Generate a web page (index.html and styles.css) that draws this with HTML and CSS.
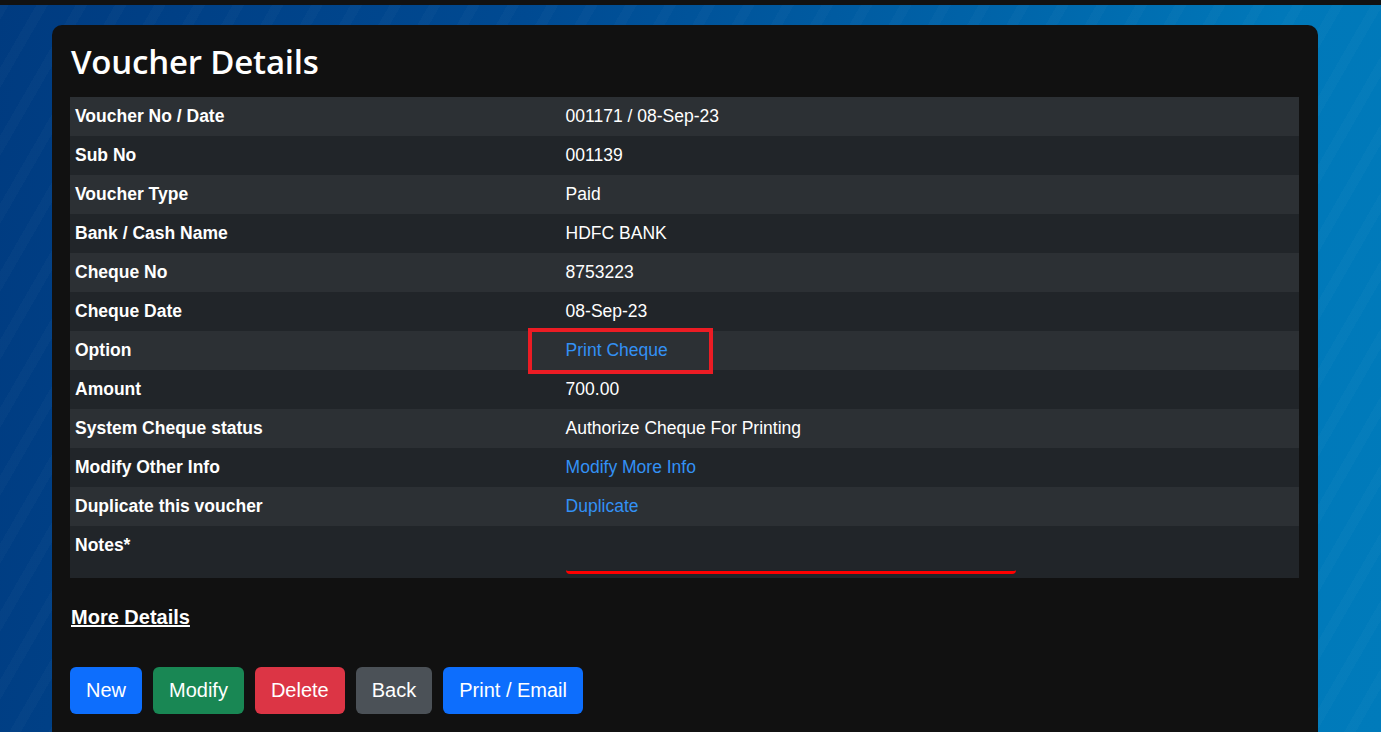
FILE: index.html
```html
<!DOCTYPE html>
<html lang="en">
<head>
<meta charset="utf-8">
<title>Voucher Details</title>
<link rel="stylesheet" href="styles.css">
</head>
<body>
<div class="topbar"></div>
<main class="page">
  <section class="card">
    <h1 class="title">Voucher Details</h1>
    <table class="details">
      <colgroup><col class="col-label"><col class="col-value"></colgroup>
      <tbody>
        <tr><th>Voucher No / Date</th><td>001171 / 08-Sep-23</td></tr>
        <tr><th>Sub No</th><td>001139</td></tr>
        <tr><th>Voucher Type</th><td>Paid</td></tr>
        <tr><th>Bank / Cash Name</th><td>HDFC BANK</td></tr>
        <tr><th>Cheque No</th><td>8753223</td></tr>
        <tr><th>Cheque Date</th><td>08-Sep-23</td></tr>
        <tr><th>Option</th><td><span class="highlight"><a href="#" class="link">Print Cheque</a></span></td></tr>
        <tr><th>Amount</th><td>700.00</td></tr>
        <tr><th>System Cheque status</th><td>Authorize Cheque For Printing</td></tr>
        <tr><th>Modify Other Info</th><td><a href="#" class="link">Modify More Info</a></td></tr>
        <tr><th>Duplicate this voucher</th><td><a href="#" class="link">Duplicate</a></td></tr>
        <tr class="notes-row"><th>Notes*</th><td><input class="notes-input" type="text" aria-label="Notes"></td></tr>
      </tbody>
    </table>
    <a href="#" class="more">More Details</a>
    <div class="actions">
      <button class="btn btn-primary">New</button>
      <button class="btn btn-success">Modify</button>
      <button class="btn btn-danger">Delete</button>
      <button class="btn btn-secondary">Back</button>
      <button class="btn btn-primary">Print / Email</button>
    </div>
  </section>
</main>
</body>
</html>
```
FILE: styles.css
```css
html, body {
  margin: 0;
  padding: 0;
}
body {
  height: 732px;
  overflow: hidden;
  font-family: "Liberation Sans", Arial, sans-serif;
  font-size: 16px;
  color: #fff;
  background:
    repeating-linear-gradient(120deg, rgba(255,255,255,0.018) 0 10px, rgba(255,255,255,0) 10px 34px),
    linear-gradient(100deg, #003b80 0%, #004a92 35%, #0063a8 65%, #0078b9 85%, #007bbb 100%);
}
.topbar {
  height: 5px;
  background: #121212;
}
.page {
  padding: 20px 63px 0 52px;
}
.card {
  background: #111111;
  border-radius: 10px;
  padding: 16px 19px 60px 18px;
}
.title {
  margin: 0 0 14px 1px;
  font-family: "Open Sans", "Noto Sans", sans-serif;
  font-weight: 600;
  font-size: 33px;
  line-height: 42px;
  letter-spacing: -0.2px;
  color: #fff;
}
.details {
  width: 100%;
  border-collapse: collapse;
}
.col-label { width: 40%; }
.details th,
.details td {
  padding: 8px 5px 8px 5px;
  font-size: 17.5px;
  line-height: 23px;
  text-align: left;
  vertical-align: top;
  background: #212529;
}
.details td { padding-left: 4px; }
.details th { font-weight: 700; }
.details tr:nth-child(odd) th,
.details tr:nth-child(odd) td {
  background: #2c3034;
}
.link {
  color: #3391f5;
  text-decoration: none;
}
.highlight {
  position: relative;
}
.highlight::before {
  content: "";
  position: absolute;
  left: -38px;
  top: -12px;
  width: 177px;
  height: 38px;
  border: 4px solid #ec1c24;
}
.notes-row th,
.notes-row td {
  padding-bottom: 4px;
}
.notes-input {
  display: block;
  box-sizing: border-box;
  width: 450px;
  height: 40px;
  margin: 0;
  background: transparent;
  border: none;
  border-bottom: 3px solid #ff0000;
  border-radius: 0 0 4px 4px;
  color: #fff;
  font: inherit;
  outline: none;
}
.more {
  display: inline-block;
  margin: 27px 0 0 1px;
  font-weight: 700;
  font-size: 20px;
  line-height: 24px;
  color: #fff;
  text-decoration: underline;
}
.actions {
  display: flex;
  gap: 11px;
  margin-top: 38px;
}
.btn {
  font-family: "Liberation Sans", Arial, sans-serif;
  font-size: 20px;
  line-height: 31px;
  padding: 8px 16px;
  border: none;
  border-radius: 6px;
  color: #fff;
  cursor: pointer;
}
.btn-primary { background: #0d6efd; }
.btn-success { background: #198754; }
.btn-danger { background: #dc3545; }
.btn-secondary { background: #4b5157; }
```
